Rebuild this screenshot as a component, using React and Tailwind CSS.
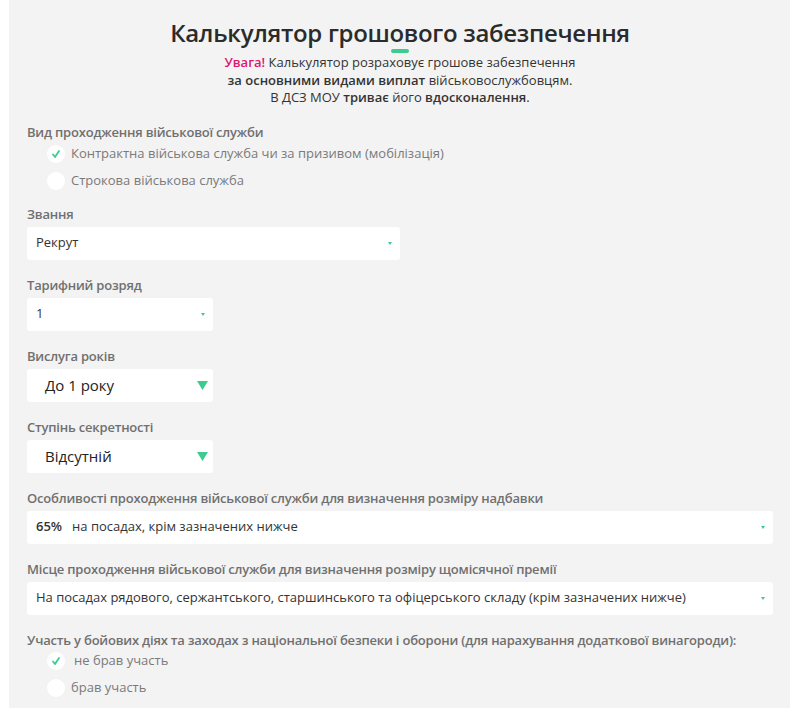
import React from "react";

const F = { fontFamily: '"Open Sans", "Liberation Sans", sans-serif' };

function Radio({ checked, children, textClass = "" }) {
  return (
    <div className="flex items-center h-[27px] pl-[20px]">
      <div className="w-[18px] h-[18px] rounded-full bg-white flex items-center justify-center shrink-0">
        {checked && (
          <svg width="10" height="10" viewBox="0 0 10 10">
            <path d="M2 5.5 L4 8 L8 2" fill="none" stroke="#3dcc8e" strokeWidth="1.8" strokeLinecap="round" strokeLinejoin="round" />
          </svg>
        )}
      </div>
      <span className={`ml-[6px] text-[13px] text-[#7a7a7a] ${textClass}`}>{children}</span>
    </div>
  );
}

function Label({ children }) {
  return <div className="text-[13px] leading-[17px] font-semibold tracking-[-0.2px] text-[#707070] whitespace-nowrap">{children}</div>;
}

function SmallSelect({ w, children }) {
  return (
    <div className={`mt-[4px] h-[33px] ${w} bg-white rounded-[3px] flex items-center justify-between pl-[9px] pr-[8px]`}>
      <span className="text-[13px] text-[#333]">{children}</span>
      <svg width="4" height="3" viewBox="0 0 4 3"><path d="M0 0 L4 0 L2 3 Z" fill="#3dcc8e" /></svg>
    </div>
  );
}

function BigSelect({ children }) {
  return (
    <div className="mt-[4px] h-[33px] w-[186px] bg-white rounded-[3px] flex items-center justify-between pl-[18px] pr-[5px]">
      <span className="text-[15px] text-[#222]">{children}</span>
      <svg width="11" height="9" viewBox="0 0 11 9"><path d="M0 0 L11 0 L5.5 9 Z" fill="#3dcc8e" /></svg>
    </div>
  );
}

export default function App() {
  return (
    <div className="bg-white min-h-[708px]" style={F}>
      <div className="ml-[9px] w-[781px] min-h-[708px] bg-[#f3f3f3] pl-[18px] pr-[17px] pt-[18px]">
        <h1 className="text-center text-[24px] leading-[30px] font-semibold tracking-[-0.3px] text-[#2b2b2b]">Калькулятор грошового забезпечення</h1>
        <div className="mx-auto mt-[1px] w-[18px] h-[4px] rounded-full bg-[#3dcc8e]" />
        <div className="mt-[1px] text-center text-[13px] leading-[17.5px] text-[#333]">
          <div><b className="font-semibold text-[#e0166b]">Увага!</b> Калькулятор розраховує грошове забезпечення</div>
          <div><b className="font-semibold">за основними видами виплат</b> військовослужбовцям.</div>
          <div>В ДСЗ МОУ <b className="font-semibold">триває</b> його <b className="font-semibold">вдосконалення</b>.</div>
        </div>

        <div className="mt-[17px]">
          <Label>Вид проходження військової служби</Label>
          <Radio checked>Контрактна військова служба чи за призивом (мобілізація)</Radio>
          <Radio>Строкова військова служба</Radio>
        </div>

        <div className="mt-[11px]">
          <Label>Звання</Label>
          <SmallSelect w="w-[373px]">Рекрут</SmallSelect>
        </div>

        <div className="mt-[17px]">
          <Label>Тарифний розряд</Label>
          <SmallSelect w="w-[186px]">1</SmallSelect>
        </div>

        <div className="mt-[17px]">
          <Label>Вислуга років</Label>
          <BigSelect>До 1 року</BigSelect>
        </div>

        <div className="mt-[17px]">
          <Label>Ступінь секретності</Label>
          <BigSelect>Відсутній</BigSelect>
        </div>

        <div className="mt-[17px]">
          <Label>Особливості проходження військової служби для визначення розміру надбавки</Label>
          <div className="mt-[4px] h-[33px] w-[746px] bg-white rounded-[3px] flex items-center justify-between pl-[9px] pr-[8px]">
            <span className="text-[13px] text-[#333]"><b className="font-semibold mr-[10px]">65%</b>на посадах, крім зазначених нижче</span>
            <svg width="4" height="3" viewBox="0 0 4 3"><path d="M0 0 L4 0 L2 3 Z" fill="#3dcc8e" /></svg>
          </div>
        </div>

        <div className="mt-[17px]">
          <Label>Місце проходження військової служби для визначення розміру щомісячної премії</Label>
          <SmallSelect w="w-[746px]">На посадах рядового, сержантського, старшинського та офіцерського складу (крім зазначених нижче)</SmallSelect>
        </div>

        <div className="mt-[17px]">
          <Label>Участь у бойових діях та заходах з національної безпеки і оборони (для нарахування додаткової винагороди):</Label>
          <div className="mt-[-1px]">
            <Radio checked textClass="ml-[9px]">не брав участь</Radio>
            <Radio>брав участь</Radio>
          </div>
        </div>
      </div>
    </div>
  );
}
